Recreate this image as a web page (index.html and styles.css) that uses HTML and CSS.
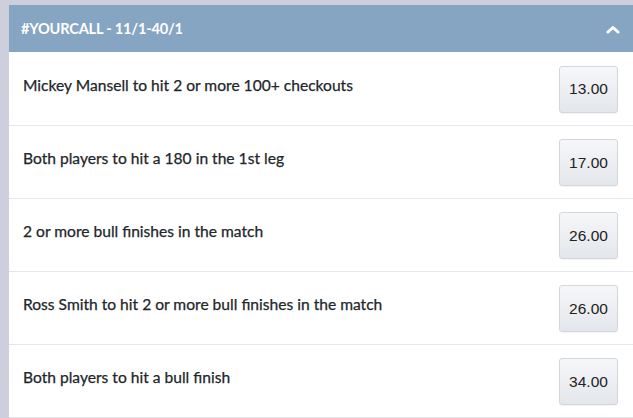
FILE: index.html
```html
<!DOCTYPE html>
<html>
<head>
<meta charset="utf-8">
<link rel="stylesheet" href="styles.css">
</head>
<body>
<div class="panel">
  <div class="header">
    <span class="title">#YOURCALL - 11/1-40/1</span>
    <svg class="chev" width="14" height="9" viewBox="0 0 14 9"><path d="M2 7 L7 2.5 L12 7" fill="none" stroke="#fff" stroke-width="3" stroke-linecap="round" stroke-linejoin="round"/></svg>
  </div>
  <div class="row row-first"><span class="label">Mickey Mansell to hit 2 or more 100+ checkouts</span><button class="odds">13.00</button></div>
  <div class="row"><span class="label">Both players to hit a 180 in the 1st leg</span><button class="odds">17.00</button></div>
  <div class="row"><span class="label">2 or more bull finishes in the match</span><button class="odds">26.00</button></div>
  <div class="row"><span class="label">Ross Smith to hit 2 or more bull finishes in the match</span><button class="odds">26.00</button></div>
  <div class="row"><span class="label">Both players to hit a bull finish</span><button class="odds">34.00</button></div>
</div>
</body>
</html>
```
FILE: styles.css
```css
html, body { margin: 0; padding: 0; }
body {
  background: #cdd0dc;
  padding: 5px 0 0 9px;
  height: 418px;
  box-sizing: border-box;
  overflow: hidden;
  font-family: Lato, "Liberation Sans", sans-serif;
}
.panel { background: #fff; }
.header {
  height: 47px;
  background: #86a5c3;
  display: flex;
  align-items: center;
  justify-content: space-between;
  padding: 0 13px 0 12px;
  box-sizing: border-box;
}
.title {
  color: #fff;
  font-weight: 700;
  font-size: 14.6px;
  letter-spacing: -0.2px;
}
.chev { margin-top: 1px; }
.row {
  height: 73px;
  box-sizing: border-box;
  border-bottom: 1px solid #e6e7ec;
  display: flex;
  align-items: center;
  justify-content: space-between;
  padding: 0 15px 0 14px;
}
.row-first { height: 74px; }
.label {
  color: #22262a;
  font-size: 15.6px;
  margin-top: -8px;
  -webkit-text-stroke: 0.25px #22262a;
}
.odds {
  width: 59px;
  height: 47px;
  border: 1px solid #d3d6dc;
  border-radius: 3px;
  background: linear-gradient(#f6f7f9, #e3e6eb);
  font-family: "Liberation Sans", Arial, sans-serif;
  font-size: 15.5px;
  color: #222;
  padding: 0;
  margin-top: 1px;
  box-shadow: 0 1px 1px rgba(0,0,0,0.05);
}
```
